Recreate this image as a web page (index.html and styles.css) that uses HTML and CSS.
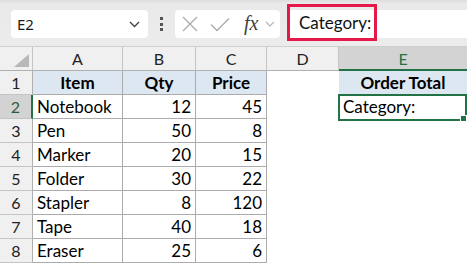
FILE: index.html
```html
<!DOCTYPE html>
<html lang="en">
  <head>
    <meta charset="utf-8" />
    <title>Sheet</title>
    <link rel="stylesheet" href="styles.css">
  </head>
  <body>
    <div class="toolbar">
      <div class="namebox">
        <span>E2</span>
        <svg width="11" height="7" viewBox="0 0 11 7"><path d="M1 1 L5.5 5.5 L10 1" fill="none" stroke="#404040" stroke-width="1.3"/></svg>
      </div>
      <div class="dots"><i></i><i></i><i></i></div>
      <div class="fxbox">
        <svg class="cancel" width="16" height="16" viewBox="0 0 16 16"><path d="M1 1 L15 15 M15 1 L1 15" stroke="#ababab" stroke-width="1.3"/></svg>
        <svg class="enter" width="20" height="15" viewBox="0 0 20 15"><path d="M1 7.5 L7 13.5 L19 1.5" fill="none" stroke="#ababab" stroke-width="1.3"/></svg>
        <span class="fx">fx</span>
        <svg width="10" height="6" viewBox="0 0 10 6"><path d="M1 1 L5 5 L9 1" fill="none" stroke="#b5b5b5" stroke-width="1.1"/></svg>
      </div>
      <div class="formula">
        <span class="mark">Category:</span>
      </div>
    </div>

    <div class="sheet">
      <div class="corner"></div>
      <div class="hd">A</div>
      <div class="hd">B</div>
      <div class="hd">C</div>
      <div class="hd">D</div>
      <div class="hd active">E</div>

      <div class="rh">1</div>
      <div class="c title">Item</div>
      <div class="c title">Qty</div>
      <div class="c title">Price</div>
      <div class="e"></div>
      <div class="e title">Order Total</div>

      <div class="rh active">2</div>
      <div class="c">Notebook</div>
      <div class="c num">12</div>
      <div class="c num">45</div>
      <div class="e"></div>
      <div class="e selected">Category:</div>

      <div class="rh">3</div>
      <div class="c">Pen</div>
      <div class="c num">50</div>
      <div class="c num">8</div>
      <div class="e"></div>
      <div class="e"></div>

      <div class="rh">4</div>
      <div class="c">Marker</div>
      <div class="c num">20</div>
      <div class="c num">15</div>
      <div class="e"></div>
      <div class="e"></div>

      <div class="rh">5</div>
      <div class="c">Folder</div>
      <div class="c num">30</div>
      <div class="c num">22</div>
      <div class="e"></div>
      <div class="e"></div>

      <div class="rh">6</div>
      <div class="c">Stapler</div>
      <div class="c num">8</div>
      <div class="c num">120</div>
      <div class="e"></div>
      <div class="e"></div>

      <div class="rh">7</div>
      <div class="c">Tape</div>
      <div class="c num">40</div>
      <div class="c num">18</div>
      <div class="e"></div>
      <div class="e"></div>

      <div class="rh">8</div>
      <div class="c">Eraser</div>
      <div class="c num">25</div>
      <div class="c num">6</div>
      <div class="e"></div>
      <div class="e"></div>
    </div>
  </body>
</html>
```

FILE: styles.css
```css
* {
  margin: 0;
  padding: 0;
  box-sizing: border-box;
}
body {
  width: 467px;
  height: 264px;
  overflow: hidden;
  background: #ffffff;
  font-family: "Lato", "Liberation Sans", sans-serif;
  color: #000000;
}

/* formula bar */
.toolbar {
  height: 46px;
  display: flex;
  align-items: flex-start;
  padding-top: 10px;
  background: linear-gradient(#dedede 0, #e9e9e9 4px, #ececec 100%);
}
.namebox {
  width: 137px;
  height: 28px;
  margin-left: 11px;
  background: #ffffff;
  border-radius: 4px;
  display: flex;
  align-items: center;
  justify-content: space-between;
  padding: 0 8px 0 6px;
  font-family: "Noto Sans", "Open Sans", sans-serif;
  font-size: 15px;
  color: #1a1a1a;
}
.dots {
  width: 27px;
  height: 28px;
  display: flex;
  flex-direction: column;
  align-items: center;
  justify-content: center;
  gap: 2.5px;
}
.dots i {
  width: 3px;
  height: 3px;
  background: #555555;
}
.fxbox {
  width: 105px;
  height: 28px;
  background: #ffffff;
  border-radius: 4px;
  display: flex;
  align-items: center;
  padding-left: 7px;
}
.fxbox .enter {
  margin-left: 12px;
}
.fx {
  margin-left: 14px;
  margin-right: 7px;
  font-family: "Liberation Serif", serif;
  font-style: italic;
  font-size: 20px;
  color: #404040;
  line-height: 1;
  margin-top: -2px;
}
.formula {
  flex: 1;
  height: 28px;
  margin-left: 8px;
  background: #ffffff;
  border-radius: 4px 0 0 4px;
  display: flex;
  align-items: center;
}
.mark {
  width: 90px;
  height: 37px;
  margin-left: -1px;
  margin-top: -3px;
  border: 3px solid #e4194a;
  padding-left: 9px;
  display: flex;
  align-items: center;
  font-size: 17px;
  color: #111111;
}

/* grid */
.sheet {
  display: grid;
  grid-template-columns: 33px 90px 73px 71px 72px 128px;
  grid-auto-rows: 24px;
  border-top: 1px solid #cfcfcf;
  font-size: 17px;
  line-height: 24px;
}
.sheet > div {
  white-space: nowrap;
}
.corner {
  background: #f0f0f0;
  border-right: 1px solid #c4c4c4;
  border-bottom: 1px solid #b0b0b0;
  position: relative;
}
.corner::after {
  content: "";
  position: absolute;
  right: 3px;
  bottom: 3px;
  width: 15px;
  height: 13px;
  background: #b8b8b8;
  clip-path: polygon(100% 0, 100% 100%, 0 100%);
}
.hd {
  height: 24px;
  background: #f0f0f0;
  border-right: 1px solid #c4c4c4;
  border-bottom: 1px solid #b0b0b0;
  text-align: center;
  font-size: 16px;
  color: #222222;
}
.hd.active {
  background: #d3d3d3;
  border-right: none;
  border-bottom: 2px solid #217346;
  color: #217346;
  line-height: 23px;
}
.rh {
  background: #f0f0f0;
  border-right: 1px solid #b0b0b0;
  border-bottom: 1px solid #c4c4c4;
  text-align: center;
  font-size: 16px;
  color: #222222;
}
.rh.active {
  background: #d3d3d3;
  border-right: 2px solid #217346;
  color: #2d5a40;
}
.c {
  border-right: 1px solid #ababab;
  border-bottom: 1px solid #ababab;
  padding: 0 4px;
}
.num {
  text-align: right;
}
.title {
  background: #dde7f2;
  font-weight: bold;
  text-align: center;
}
.selected {
  margin: -1px 0 -2px -1px;
  border: 2px solid #217346;
  padding-left: 3px;
  line-height: 22px;
  position: relative;
}
.selected::after {
  content: "";
  position: absolute;
  right: -2px;
  bottom: -3px;
  width: 5px;
  height: 5px;
  background: #217346;
  border: 1px solid #ffffff;
}
```
